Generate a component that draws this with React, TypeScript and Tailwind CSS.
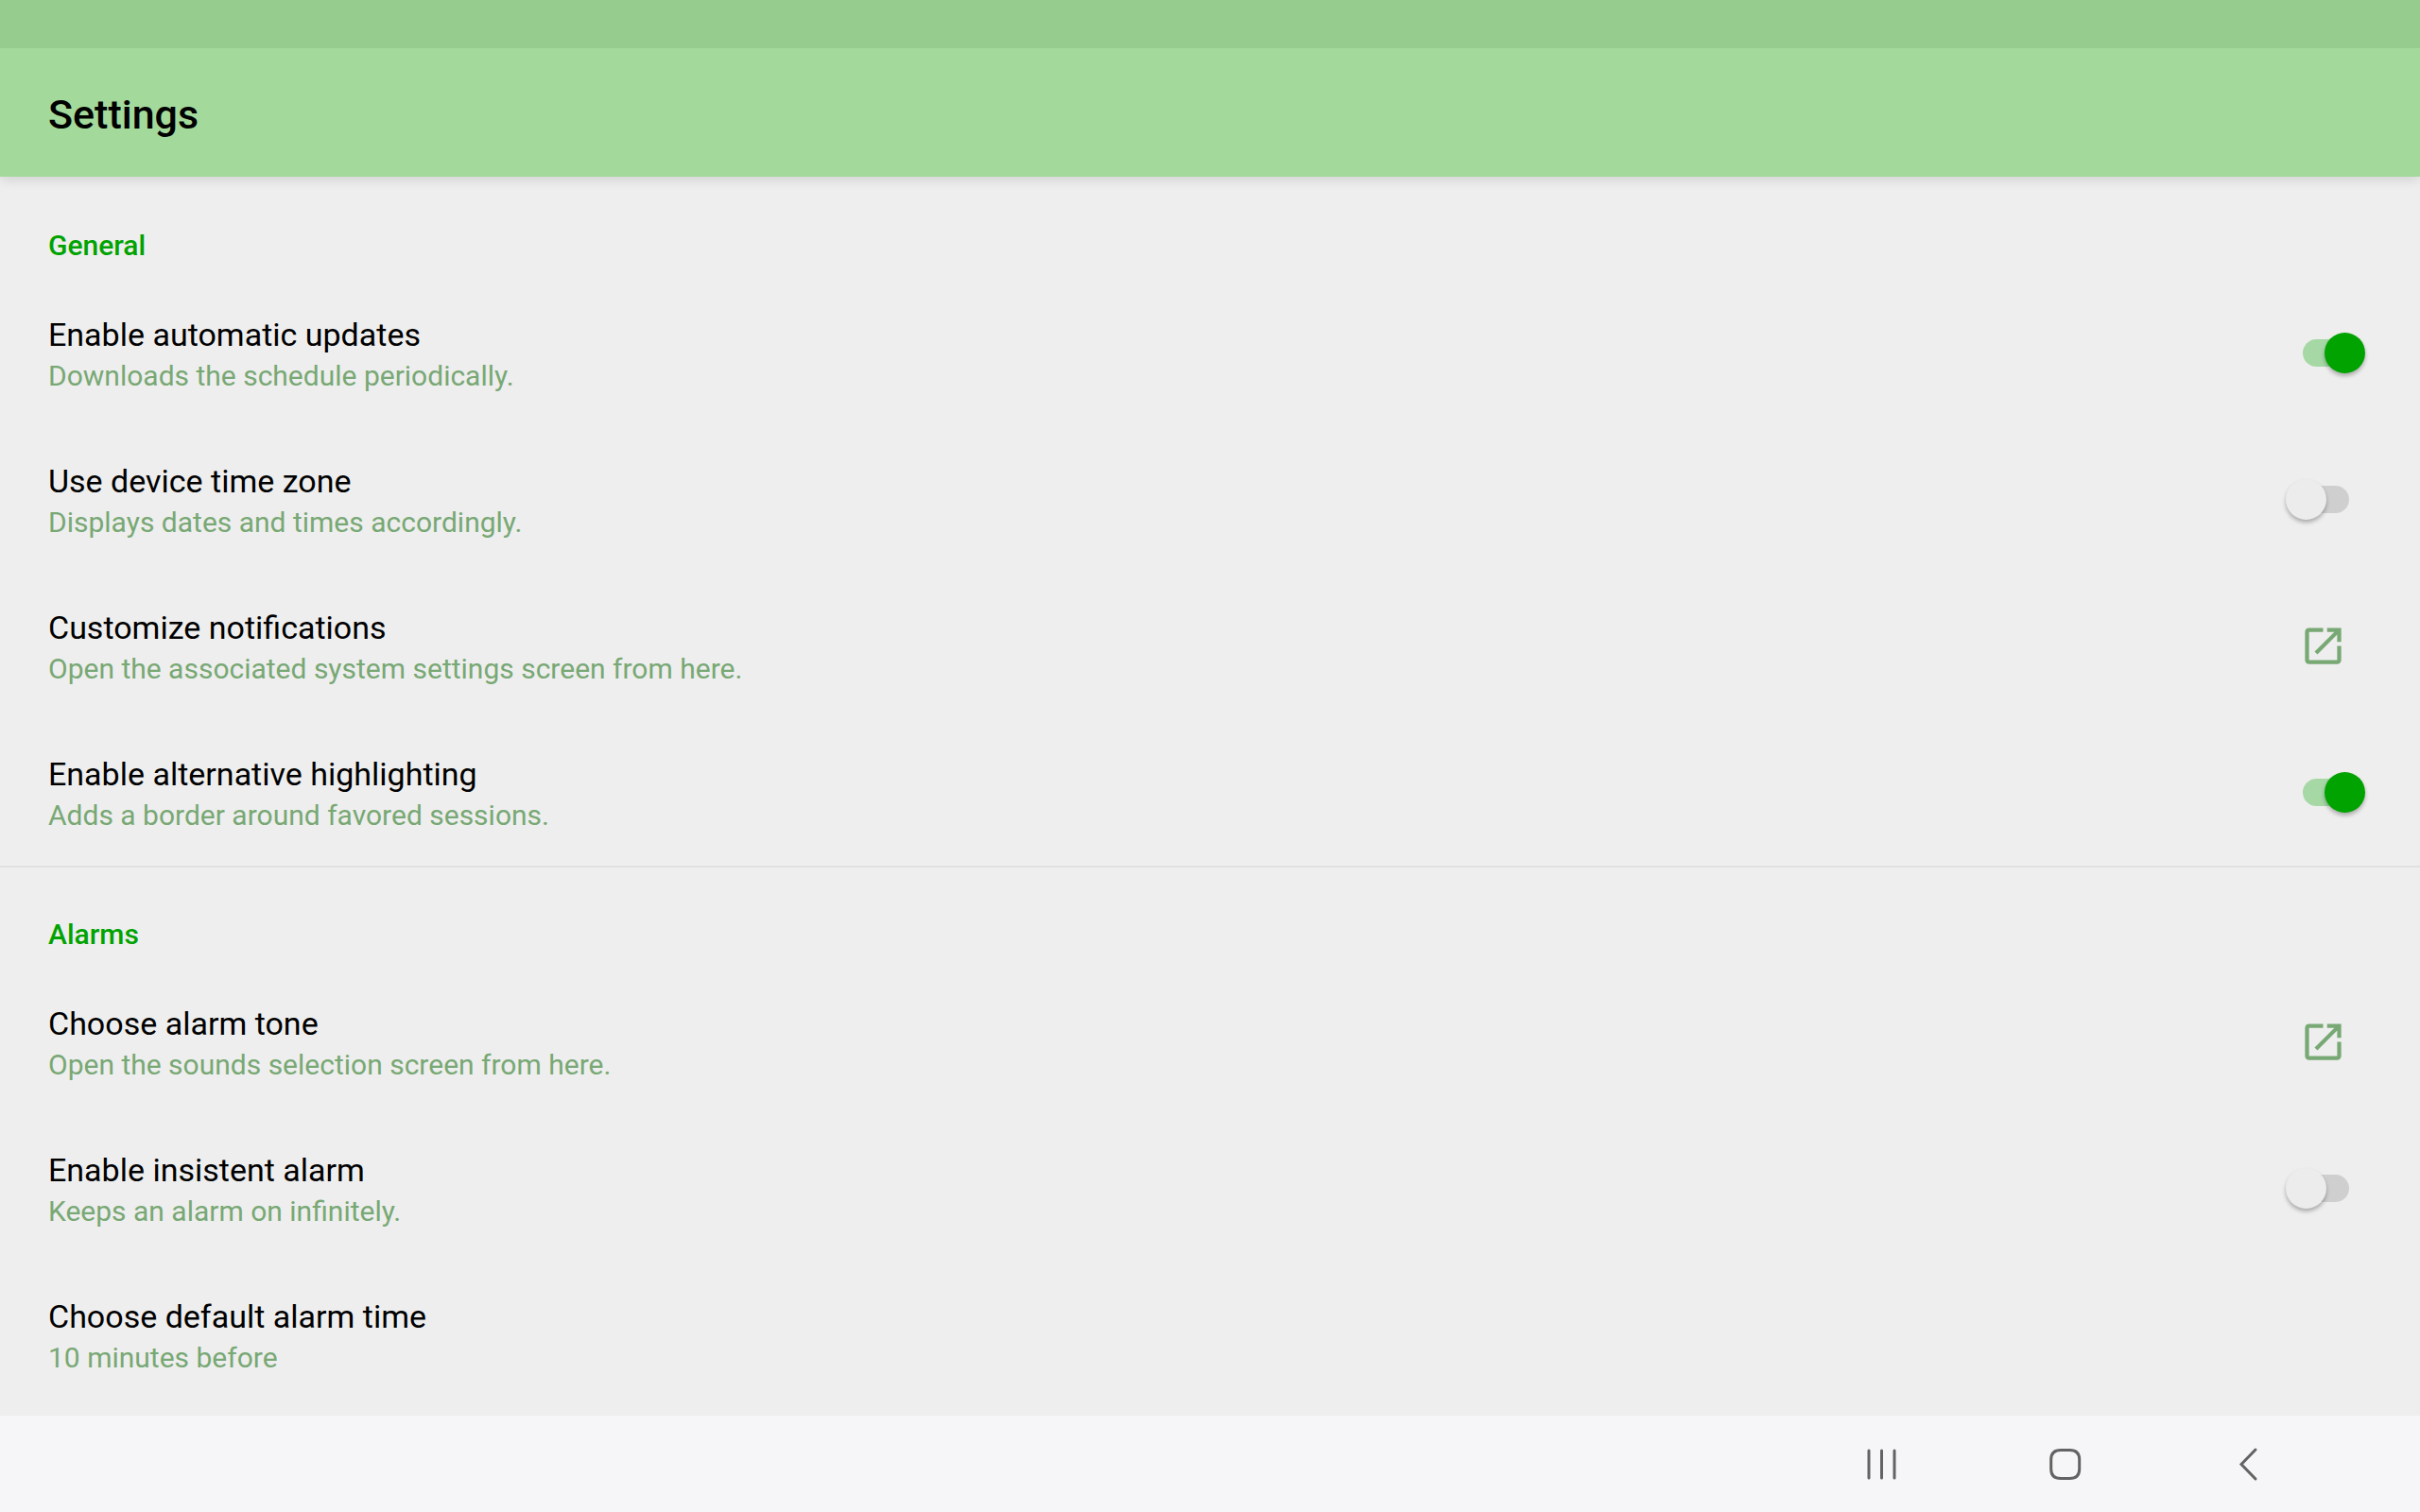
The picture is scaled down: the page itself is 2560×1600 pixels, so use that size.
import { useState } from "react";
import { MdOpenInNew } from "react-icons/md";

type settingType = {
  id: string;
  title: string;
  summary: string;
  kind: "switch" | "link" | "choice";
  enabled?: boolean;
};

const generalSettings: settingType[] = [
  {
    id: "auto-updates",
    title: "Enable automatic updates",
    summary: "Downloads the schedule periodically.",
    kind: "switch",
    enabled: true,
  },
  {
    id: "device-time-zone",
    title: "Use device time zone",
    summary: "Displays dates and times accordingly.",
    kind: "switch",
    enabled: false,
  },
  {
    id: "notifications",
    title: "Customize notifications",
    summary: "Open the associated system settings screen from here.",
    kind: "link",
  },
  {
    id: "highlighting",
    title: "Enable alternative highlighting",
    summary: "Adds a border around favored sessions.",
    kind: "switch",
    enabled: true,
  },
];

const alarmSettings: settingType[] = [
  {
    id: "alarm-tone",
    title: "Choose alarm tone",
    summary: "Open the sounds selection screen from here.",
    kind: "link",
  },
  {
    id: "insistent-alarm",
    title: "Enable insistent alarm",
    summary: "Keeps an alarm on infinitely.",
    kind: "switch",
    enabled: false,
  },
  {
    id: "alarm-time",
    title: "Choose default alarm time",
    summary: "10 minutes before",
    kind: "choice",
  },
];

const rowClass =
  "w-full flex justify-between items-center pl-[51px] pr-[58px] text-left cursor-pointer";

const SettingText = ({ title, summary }: { title: string; summary: string }) => (
  <span className="flex flex-col pt-9 pb-[31px]">
    <span className="text-[34px] leading-[44px] text-black">{title}</span>
    <span className="text-[30px] leading-[44px] text-[#78a874]">{summary}</span>
  </span>
);

const SettingRow = ({ setting }: { setting: settingType }) => {
  const [checked, setChecked] = useState(setting.enabled ?? false);

  if (setting.kind === "switch") {
    return (
      <label htmlFor={setting.id} className={rowClass}>
        <SettingText title={setting.title} summary={setting.summary} />
        <input
          id={setting.id}
          type="checkbox"
          role="switch"
          checked={checked}
          onChange={(e) => setChecked(e.target.checked)}
          className="appearance-none relative shrink-0 w-[84px] h-[43px] cursor-pointer before:absolute before:left-[18px] before:top-[7px] before:w-[49px] before:h-[29px] before:rounded-full before:bg-[#cfcfcf] checked:before:bg-[#a6d8a6] after:absolute after:left-0 after:top-0 after:size-[43px] after:rounded-full after:bg-[#ececec] after:shadow-[0_3px_4px_rgba(0,0,0,0.28)] checked:after:left-[41px] checked:after:bg-[#00a300]"
        />
      </label>
    );
  }

  if (setting.kind === "link") {
    return (
      <a href="#" className={rowClass}>
        <SettingText title={setting.title} summary={setting.summary} />
        <MdOpenInNew className="shrink-0 size-[51px] mr-[19px] text-[#78a874]" />
      </a>
    );
  }

  return (
    <button type="button" className={rowClass}>
      <SettingText title={setting.title} summary={setting.summary} />
    </button>
  );
};

const SettingSection = ({
  name,
  settings,
}: {
  name: string;
  settings: settingType[];
}) => {
  return (
    <section>
      <h2 className="px-[51px] pt-[53px] pb-4 text-[30px] leading-10 font-medium text-[#00a300]">
        {name}
      </h2>
      {settings.map((setting) => (
        <SettingRow key={setting.id} setting={setting} />
      ))}
    </section>
  );
};

const NavigationBar = () => {
  const buttonClass = "w-[194px] h-full flex justify-center items-center";
  return (
    <nav className="h-[102px] shrink-0 flex justify-end items-center pr-[84px] bg-[#f6f6f8] text-[#636363]">
      <button type="button" aria-label="Recent apps" className={buttonClass}>
        <svg width="40" height="40" viewBox="0 0 40 40" fill="none" stroke="currentColor" strokeWidth="3" strokeLinecap="round">
          <path d="M6 6v29M19.500 6v29M33 6v29" />
        </svg>
      </button>
      <button type="button" aria-label="Home" className={buttonClass}>
        <svg width="40" height="40" viewBox="0 0 40 40" fill="none" stroke="currentColor" strokeWidth="3">
          <path d="M15 5.500h9.400C31.500 5.500 34.700 8.700 34.700 15.500v10c0 6.800-3.200 10-10.300 10H15C7.900 35.500 4.700 32.300 4.700 25.500v-10C4.700 8.700 7.900 5.500 15 5.500z" />
        </svg>
      </button>
      <button type="button" aria-label="Back" className={buttonClass}>
        <svg width="40" height="40" viewBox="0 0 40 40" fill="none" stroke="currentColor" strokeWidth="3" strokeLinecap="round">
          <path d="M27 5L12 20.500l15 15.500" />
        </svg>
      </button>
    </nav>
  );
};

const App = () => {
  return (
    <div className="h-screen flex flex-col bg-[#eeeeee] font-[Roboto,sans-serif]">
      <div className="relative z-10 h-[51px] shrink-0 bg-[#96cd8f]" />
      <header className="relative h-[136px] shrink-0 flex items-center px-[51px] pt-1 bg-[#a3da9b] shadow-[0_2px_12px_rgba(0,0,0,0.14)]">
        <h1 className="text-[43px] leading-[50px] font-medium text-black">
          Settings
        </h1>
      </header>
      <main className="flex-1 min-h-0 overflow-hidden">
        <SettingSection name="General" settings={generalSettings} />
        <div className="h-[2px] -mb-[2px] bg-[#e0e0e0]" />
        <SettingSection name="Alarms" settings={alarmSettings} />
      </main>
      <NavigationBar />
    </div>
  );
};

export default App;
